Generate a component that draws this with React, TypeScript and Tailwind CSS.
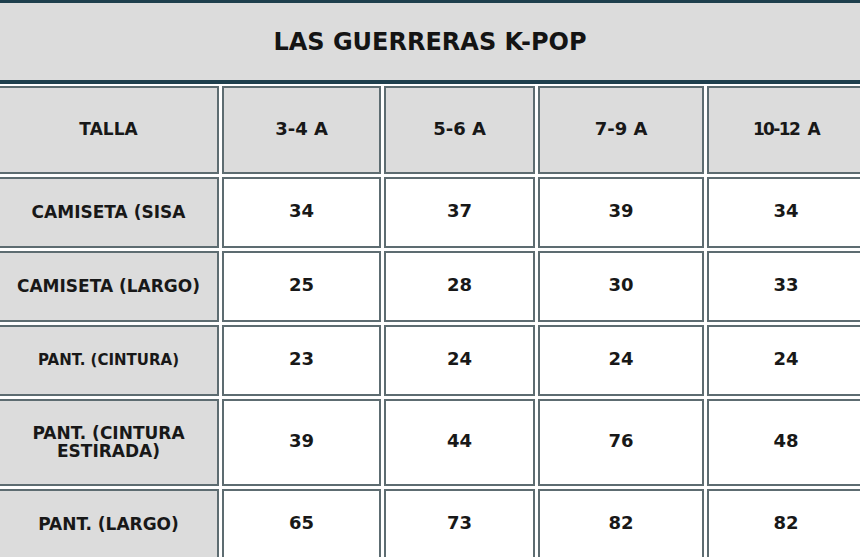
import React from 'react';

const headers: { text: string; size: string }[] = [
  { text: 'TALLA', size: 'text-[17px]' },
  { text: '3-4 A', size: 'text-[18px]' },
  { text: '5-6 A', size: 'text-[18px]' },
  { text: '7-9 A', size: 'text-[18px]' },
  { text: '10-12 A', size: 'text-[17px] tracking-[-1.6px] [word-spacing:4px]' },
];

const rows: { label: string; size: string; values: string[] }[] = [
  { label: 'CAMISETA (SISA', size: 'text-[17px]', values: ['34', '37', '39', '34'] },
  { label: 'CAMISETA (LARGO)', size: 'text-[17px]', values: ['25', '28', '30', '33'] },
  { label: 'PANT. (CINTURA)', size: 'text-[15px]', values: ['23', '24', '24', '24'] },
  { label: 'PANT. (CINTURA\nESTIRADA)', size: 'text-[17px]', values: ['39', '44', '76', '48'] },
  { label: 'PANT. (LARGO)', size: 'text-[17px]', values: ['65', '73', '82', '82'] },
];

const cell = 'flex items-center justify-center text-center border-2 border-[#5d6c71] text-[#181818] font-bold leading-[18px] whitespace-pre-line';

export default function App() {
  return (
    <div className="w-[860px] h-[557px] overflow-hidden bg-white" style={{ fontFamily: '"DejaVu Sans", "Liberation Sans", sans-serif' }}>
      <div className="h-[84px] bg-[#dcdcdc] border-t-[3px] border-b-4 border-[#1e3f4d] flex items-center justify-center">
        <h1 className="text-[24px] font-bold text-[#141414]">LAS GUERRERAS K-POP</h1>
      </div>
      <div className="ml-[-2px] mt-[2px] grid grid-cols-[221px_159px_151px_166px_158px] grid-rows-[88px_71px_71px_71px_87px_71px] gap-x-[3px] gap-y-[3px]">
        {headers.map((h) => (
          <div key={h.text} className={`${cell} bg-[#dcdcdc] pb-[3px] ${h.size}`}>{h.text}</div>
        ))}
        {rows.map((r) => (
          <React.Fragment key={r.label}>
            <div className={`${cell} bg-[#dcdcdc] pb-[2px] ${r.size}`}>{r.label}</div>
            {r.values.map((v, i) => (
              <div key={i} className={`${cell} bg-white pb-[3px] text-[18px]`}>{v}</div>
            ))}
          </React.Fragment>
        ))}
      </div>
    </div>
  );
}
